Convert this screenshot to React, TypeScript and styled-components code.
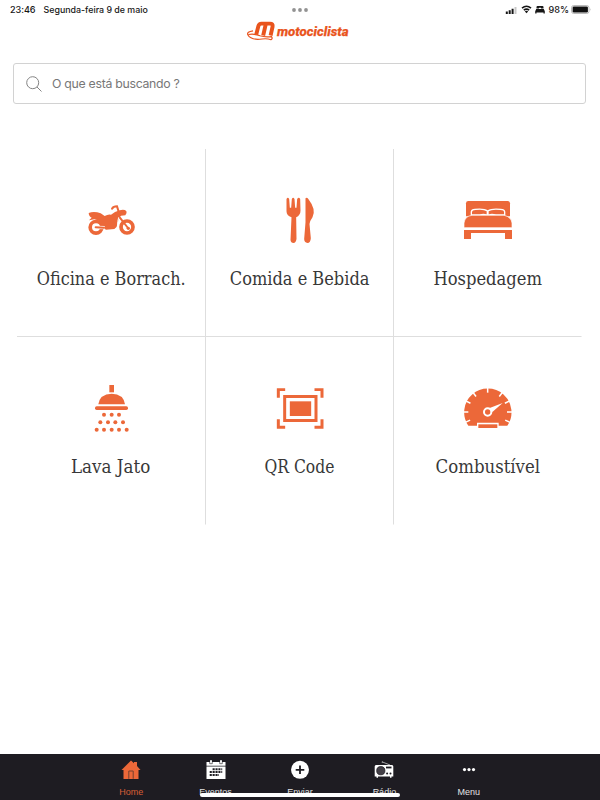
import React from "react";
import styled, { createGlobalStyle } from "styled-components";

const ORANGE = "#ec6839";
const DARK = "#1e1c22";

const GlobalStyle = createGlobalStyle`
  * { box-sizing: border-box; }
  body { margin: 0; background: #fff; }
`;

const Screen = styled.div`
  width: 600px;
  height: 800px;
  display: flex;
  flex-direction: column;
  overflow: hidden;
  background: #fff;
  font-family: Inter, "Liberation Sans", sans-serif;
`;

const StatusBar = styled.header`
  height: 19px;
  padding: 0 8px 0 10px;
  display: grid;
  grid-template-columns: 1fr 20px 1fr;
  align-items: center;
  color: #161616;
  font-size: 9.1px;
  font-weight: 500;
`;

const Clock = styled.div`
  display: flex;
  gap: 8px;
  white-space: nowrap;
`;

const Time = styled.span`
  letter-spacing: -0.05px;
`;

const DateText = styled.span`
  font-size: 8.85px;
`;

const Indicators = styled.div`
  display: flex;
  justify-content: flex-end;
  align-items: center;
`;

const Percent = styled.span`
  margin: 0 2px 0 3px;
`;

const LogoRow = styled.div`
  height: 44px;
  display: flex;
  justify-content: center;
`;

const Logo = styled.svg`
  width: 106px;
  height: 24px;
  margin-right: 4px;
`;

const LogoText = styled.text`
  font-family: Roboto, sans-serif;
  font-size: 13.2px;
  font-weight: 800;
  font-style: italic;
  fill: #e9541d;
  stroke: #e9541d;
  stroke-width: 0.25px;
`;

const SearchBox = styled.div`
  height: 41px;
  margin: 0 14px 0 13px;
  padding-left: 12px;
  display: flex;
  align-items: center;
  gap: 10px;
  border: 1px solid #d2d2d2;
  border-radius: 3px;
  color: #777;
  font-size: 12.3px;
  letter-spacing: -0.29px;
`;

const Grid = styled.main`
  margin: 45px 0 0 17px;
  display: grid;
  grid-template-columns: 189px 188px 188px;
  grid-template-rows: 188px 188px;
`;

const Cell = styled.div<{ $right: boolean; $bottom: boolean }>`
  display: flex;
  flex-direction: column;
  align-items: center;
  padding-top: 47px;
  border-right: 1px solid ${(p) => (p.$right ? "#dedede" : "transparent")};
  border-bottom: 1px solid ${(p) => (p.$bottom ? "#dedede" : "transparent")};
`;

const CellIcon = styled.svg`
  width: 48px;
  height: 48px;
  flex: none;
  fill: ${ORANGE};
`;

const CellLabel = styled.span<{ $stretch: number }>`
  margin-top: 24px;
  line-height: 22px;
  white-space: nowrap;
  color: #383838;
  font-family: "Roboto Slab", "DejaVu Serif", serif;
  font-size: 18px;
  transform: scaleX(${(p) => p.$stretch});
`;

const Nav = styled.nav`
  position: relative;
  height: 46px;
  margin-top: auto;
  display: flex;
  justify-content: center;
  background: ${DARK};
`;

const NavItem = styled.div<{ $active?: boolean }>`
  width: 84.4px;
  padding-top: 6px;
  display: flex;
  flex-direction: column;
  align-items: center;
  color: ${(p) => (p.$active ? ORANGE : "#fff")};
  font-family: "Liberation Sans", sans-serif;
  font-size: 9px;
  line-height: 11px;
`;

const NavIcon = styled.svg`
  width: 20px;
  height: 20px;
  margin-bottom: 7px;
  fill: currentColor;
`;

const NavLabel = styled.span`
  opacity: 0.88;
`;

const HomeIndicator = styled.div`
  position: absolute;
  left: 199.5px;
  top: 39px;
  width: 200px;
  height: 4px;
  border-radius: 2px;
  background: #fff;
`;

const Motorcycle = () => (
  <CellIcon viewBox="201 18 144 144">
    <circle cx="228" cy="112" r="17.5" fill="none" stroke={ORANGE} strokeWidth="11" />
    <circle cx="321" cy="111" r="18" fill="none" stroke={ORANGE} strokeWidth="11" />
    <path d="M206 69Q222 63 242 70L254 78Q264 72 273 74L285 66L299 61Q312 57 319 63Q322 70 316 76L303 77L297 83L293 99Q292 111 283 117L258 119Q249 116 246 107Q240 91 223 88L207 91L215 83Q207 80 206 69Z" />
    <path d="M276 56Q280 49 291 49L295 62M299 82L324 114" fill="none" stroke={ORANGE} strokeWidth="6" strokeLinecap="round" />
    <path d="M229 112L254 113" stroke="#fff" strokeWidth="10" />
    <path d="M227 112L252 113" stroke={ORANGE} strokeWidth="6" strokeLinecap="round" />
    <path d="M296 82Q292 96 293 106" fill="none" stroke="#fff" strokeWidth="3" />
    <circle cx="325" cy="115" r="5" />
  </CellIcon>
);

const Cutlery = () => (
  <CellIcon viewBox="181.5 18 144 144">
    <path d="M213 27Q217 20 221 27L223 53H227L229 27Q233 20 237 27L239 53H243L245 27Q250 20 254 27L255 62Q255 75 242 82L243 147Q241 159 234 159Q226 159 225 150L228 82Q213 77 213 64Z" />
    <path d="M270 25Q274 21 279 28Q303 59 291 82Q283 93 282 102L286 145Q285 159 276 159Q266 158 266 147L270 97Z" />
  </CellIcon>
);

const Bed = () => (
  <CellIcon viewBox="147 18 144 144">
    <path d="M153 79V40Q153 33 160 33H278Q285 33 285 40V79Z" />
    <path d="M167 77V65Q168 56 180 56Q207 53 218 61Q229 53 257 56Q270 56 271 65V77Z" fill="#fff" />
    <path d="M171 73V66Q172 60 182 60Q206 57 215 64V73Q206 69 194 73ZM221 64Q231 57 256 60Q267 60 267 66V73L243 73Q230 69 221 73Z" />
    <path d="M147 113V99Q150 78 171 76H267Q288 80 291 99V113Z" stroke="#fff" strokeWidth="2" />
    <path d="M147 120H291V147H270V129H168V147H147Z" />
  </CellIcon>
);

const DROPS = [
  [132, 119], [155, 119], [177, 119],
  [121, 142], [144, 142], [166, 142], [189, 142],
  [110, 164], [132, 164], [155, 164], [177, 164], [200, 164],
];

const Shower = () => (
  <CellIcon viewBox="81 27 144 144">
    <path d="M148 30H162V52H148Z" />
    <path d="M115 88Q119 57 155 56Q191 57 195 88Z" />
    <rect x="105" y="94" width="99" height="11" rx="5" />
    {DROPS.map(([x, y]) => (
      <circle key={`${x}-${y}`} cx={x} cy={y} r="6" />
    ))}
  </CellIcon>
);

const QrFrame = () => (
  <CellIcon viewBox="76.5 27 144 144">
    <path d="M79 40H104V48H88V68H79ZM192 40H219V68H210V48H192ZM79 133H88V152H104V161H79ZM210 133H219V161H192V152H210Z" />
    <path d="M98 60H201V141H98ZM107 69V132H192V69Z" fillRule="evenodd" />
    <rect x="118" y="79" width="64" height="44" />
  </CellIcon>
);

const TICKS = [-205, -180, -153, -127, -90, -53, -27, 0, 25];

const Gauge = () => (
  <CellIcon viewBox="117 27 144 144">
    <path d="M130 152A71 71 0 1 1 247 152H221V143H156V152Z" />
    {TICKS.map((deg) => (
      <path key={deg} d="M246 111H262" transform={`rotate(${deg} 188 111)`} stroke="#fff" strokeWidth="4.5" />
    ))}
    <rect x="160" y="148" width="57" height="11" />
    <path d="M192 100L233 84L202 111Z" fill="#fff" />
    <circle cx="188" cy="111" r="11" fill={ORANGE} stroke="#fff" strokeWidth="6" />
  </CellIcon>
);

const categories = [
  { label: "Oficina e Borrach.", Icon: Motorcycle, stretch: 0.895 },
  { label: "Comida e Bebida", Icon: Cutlery, stretch: 0.9 },
  { label: "Hospedagem", Icon: Bed, stretch: 0.91 },
  { label: "Lava Jato", Icon: Shower, stretch: 0.93 },
  { label: "QR Code", Icon: QrFrame, stretch: 0.865 },
  { label: "Combustível", Icon: Gauge, stretch: 0.92 },
];

const HomeIcon = () => (
  <NavIcon viewBox="0 0 20 20">
    <path d="M10 .5L13 3.3V2H16V6L19.5 10H17.5V19H2.5V10H.5Z" />
    <path d="M7.8 18.8V11H12.2V18.8" fill="none" stroke="#74402f" strokeWidth="1" />
  </NavIcon>
);

const CalendarIcon = () => (
  <NavIcon viewBox="0 0 20 20">
    <path d="M.5 2H4V.3H6V2H14V.3H16V2H19.5V5.7H.5ZM.5 6.5H19.5V19H.5Z" />
    <path d="M3.7 1.5V3.7H6.3V1.5M13.7 1.5V3.7H16.3V1.5" fill="none" stroke={DARK} strokeWidth=".6" />
    <path d="M6.6 9.2H16.2M3.7 12.1H16.2M3.7 15H13" stroke={DARK} strokeWidth="2" strokeDasharray="2.1 .8" />
  </NavIcon>
);

const PlusIcon = () => (
  <NavIcon viewBox="0 0 20 20">
    <circle cx="10" cy="9.8" r="9" />
    <path d="M10 5.5V14M5.7 9.8H14.3" stroke={DARK} strokeWidth="1.8" />
  </NavIcon>
);

const RadioIcon = () => (
  <NavIcon viewBox="0 0 20 20">
    <path d="M8.5 2L16 5" stroke="currentColor" strokeWidth=".6" />
    <circle cx="8.3" cy="2" r=".6" />
    <path d="M2 5H18Q19.3 5 19.3 6.5V16.5H17.5V17.8H16V16.5H4V17.8H2.5V16.5H.7V6.5Q.7 5 2 5Z" />
    <circle cx="6.8" cy="10.7" r="4.1" fill="#444047" stroke={DARK} strokeWidth=".8" />
    <path d="M12 7.5H17.5" stroke={DARK} strokeWidth="1.8" />
    <circle cx="13.1" cy="13.5" r="1" fill={DARK} />
    <circle cx="16.5" cy="13.5" r="1" fill={DARK} />
  </NavIcon>
);

const MoreIcon = () => (
  <NavIcon viewBox="0 0 20 20">
    <circle cx="5.5" cy="9.6" r="1.6" />
    <circle cx="10" cy="9.6" r="1.6" />
    <circle cx="14.5" cy="9.6" r="1.6" />
  </NavIcon>
);

const navItems = [
  { label: "Home", Icon: HomeIcon },
  { label: "Eventos", Icon: CalendarIcon },
  { label: "Enviar", Icon: PlusIcon },
  { label: "Rádio", Icon: RadioIcon },
  { label: "Menu", Icon: MoreIcon },
];

const StatusIcons = () => (
  <svg width="41" height="11" viewBox="0 0 41 11">
    <path d="M.8 7.5h2v2.5h-2zM3.7 6.3h2v3.7h-2zM6.6 4.8h2v5.2h-2z" fill="#161616" />
    <path d="M9.5 3h2v7h-2z" fill="#c8c8c8" />
    <path d="M17 4.2Q21.5.3 26 4.2M18.8 6.2Q21.5 4 24.2 6.2" fill="none" stroke="#161616" strokeWidth="1.6" />
    <path d="M19.8 7.4Q21.5 6.2 23.2 7.4L21.5 9.2Z" fill="#161616" />
    <path d="M31.5 4.5V3Q31.5 2 32.5 2H37.5Q38.5 2 38.5 3V4.5H36V3.8H34V4.5ZM31.2 5H38.8L39.8 7.2V9.4H38.5V8.6H31.5V9.4H30.2V7.2Z" fill="#161616" />
  </svg>
);

export default function App() {
  return (
    <Screen>
      <GlobalStyle />
      <StatusBar>
        <Clock>
          <Time>23:46</Time>
          <DateText>Segunda-feira 9 de maio</DateText>
        </Clock>
        <svg width="20" height="6" viewBox="0 0 20 6" fill="#929292">
          <circle cx="3" cy="3" r="1.9" />
          <circle cx="9" cy="3" r="1.9" />
          <circle cx="15" cy="3" r="1.9" />
        </svg>
        <Indicators>
          <StatusIcons />
          <Percent>98%</Percent>
          <svg width="21" height="9" viewBox="0 0 21 9">
            <rect x=".5" y=".5" width="17.5" height="8" rx="2.2" fill="#fff" stroke="#aaa" strokeWidth=".8" />
            <rect x="1.6" y="1.5" width="15.3" height="6" rx="1.2" fill="#111" />
            <path d="M19 3.2Q20 4.5 19 5.8Z" fill="#aaa" />
          </svg>
        </Indicators>
      </StatusBar>
      <LogoRow>
        <Logo viewBox="245 19 106 24">
          <path d="M256 35.5L258.4 26Q259 23.6 261.5 23.6H270Q273.2 23.6 272.6 26.5L270.6 35.5M265.8 24L263.2 35.5" fill="none" stroke="#e9541d" strokeWidth="3.9" />
          <path d="M253 30.8Q246.5 31.8 247.8 34.8Q251 40.5 262 39Q267 38.3 271 39.7Q273 38.7 271.5 36.6Q265 37.5 260 35.8Q254.5 33.5 248.5 34.5" fill="#fff" stroke="#e9541d" strokeWidth="1.2" />
          <LogoText x="277" y="36.2" textLength="71.5" lengthAdjust="spacingAndGlyphs">motociclista</LogoText>
        </Logo>
      </LogoRow>
      <SearchBox>
        <svg width="16" height="16" viewBox="0 0 16 16" fill="none" stroke="#858585" strokeWidth="1">
          <circle cx="6.7" cy="6.7" r="6" />
          <path d="M11 11L15.5 15.5" />
        </svg>
        <span>O que está buscando ?</span>
      </SearchBox>
      <Grid>
        {categories.map(({ label, Icon, stretch }, i) => (
          <Cell key={label} $right={i % 3 < 2} $bottom={i < 3}>
            <Icon />
            <CellLabel $stretch={stretch}>{label}</CellLabel>
          </Cell>
        ))}
      </Grid>
      <Nav>
        {navItems.map(({ label, Icon }, i) => (
          <NavItem key={label} $active={i === 0}>
            <Icon />
            <NavLabel>{label}</NavLabel>
          </NavItem>
        ))}
        <HomeIndicator />
      </Nav>
    </Screen>
  );
}
